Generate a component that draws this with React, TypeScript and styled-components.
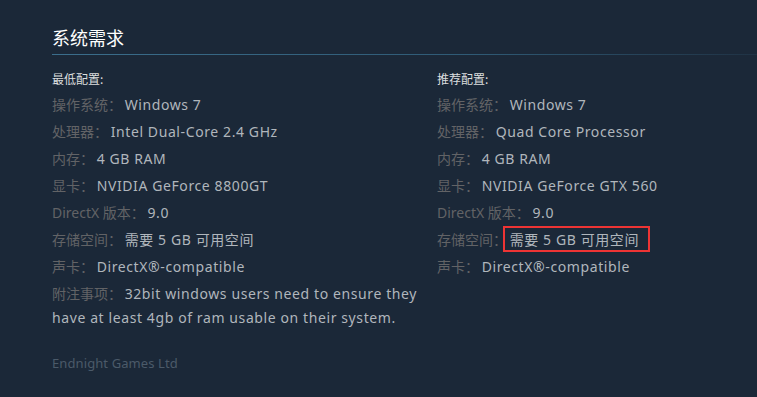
import React from "react";
import styled, { createGlobalStyle } from "styled-components";

const GlobalStyle = createGlobalStyle`
  html, body {
    margin: 0;
    padding: 0;
    background: #1b2838;
  }
  body {
    font-family: "Noto Sans", "Noto Sans CJK SC", sans-serif;
  }
`;

const Page = styled.div`
  width: 757px;
  height: 397px;
  box-sizing: border-box;
  padding: 26px 0 0 52px;
  background: #1b2838;
  overflow: hidden;
`;

const Title = styled.h2`
  margin: 0;
  padding: 0 0 6px;
  font-family: "Noto Sans CJK SC", sans-serif;
  font-size: 18px;
  line-height: 22px;
  font-weight: 400;
  color: #ffffff;
  border-bottom: 1px solid transparent;
  border-image: linear-gradient(to right, #3b6e8c 0%, #2f5a75 60%, rgba(59, 110, 140, 0.15) 100%) 1;
`;

const Columns = styled.div`
  display: grid;
  grid-template-columns: 370px 1fr;
  column-gap: 15px;
  padding-top: 15px;
`;

const Column = styled.div`
  display: flex;
  flex-direction: column;
`;

const Heading = styled.div`
  font-family: "Noto Sans CJK SC", sans-serif;
  font-size: 12px;
  line-height: 18px;
  color: #dcdedf;
  margin-bottom: 5px;
`;

const List = styled.ul`
  list-style: none;
  margin: 0;
  padding: 0;
`;

const Item = styled.li`
  font-family: "Noto Sans", "Noto Sans CJK SC", sans-serif;
  font-size: 14px;
  line-height: 24px;
  color: #b0b6bc;
  margin-bottom: 3px;
`;

const Label = styled.span`
  color: #626366;
  margin-right: -1px;
`;

const Value = styled.span<{ $marked?: boolean }>`
  position: relative;
  letter-spacing: 0.6px;
  display: ${(p) => (p.$marked ? "inline-block" : "inline")};

  ${(p) =>
    p.$marked &&
    `
    &::after {
      content: "";
      position: absolute;
      left: -7px;
      right: -11px;
      top: -2px;
      bottom: 0;
      border: 2px solid #ee3434;
    }
  `}
`;

const Publisher = styled.div`
  margin-top: 21px;
  font-size: 13px;
  letter-spacing: 0.1px;
  color: #4b5a69;
`;

type Req = { label: string; value: string; marked?: boolean };

const minimum: Req[] = [
  { label: "操作系统：", value: "Windows 7" },
  { label: "处理器：", value: "Intel Dual-Core 2.4 GHz" },
  { label: "内存：", value: "4 GB RAM" },
  { label: "显卡：", value: "NVIDIA GeForce 8800GT" },
  { label: "DirectX 版本：", value: "9.0" },
  { label: "存储空间：", value: "需要 5 GB 可用空间" },
  { label: "声卡：", value: "DirectX®-compatible" },
  { label: "附注事项：", value: "32bit windows users need to ensure they have at least 4gb of ram usable on their system." },
];

const recommended: Req[] = [
  { label: "操作系统：", value: "Windows 7" },
  { label: "处理器：", value: "Quad Core Processor" },
  { label: "内存：", value: "4 GB RAM" },
  { label: "显卡：", value: "NVIDIA GeForce GTX 560" },
  { label: "DirectX 版本：", value: "9.0" },
  { label: "存储空间：", value: "需要 5 GB 可用空间", marked: true },
  { label: "声卡：", value: "DirectX®-compatible" },
];

const ReqColumn: React.FC<{ title: string; items: Req[] }> = ({ title, items }) => (
  <Column>
    <Heading>{title}</Heading>
    <List>
      {items.map((it) => (
        <Item key={it.label}>
          <Label>{it.label}</Label> <Value $marked={it.marked}>{it.value}</Value>
        </Item>
      ))}
    </List>
  </Column>
);

const App: React.FC = () => (
  <>
    <GlobalStyle />
    <Page>
      <Title>系统需求</Title>
      <Columns>
        <ReqColumn title="最低配置:" items={minimum} />
        <ReqColumn title="推荐配置:" items={recommended} />
      </Columns>
      <Publisher>Endnight Games Ltd</Publisher>
    </Page>
  </>
);

export default App;
